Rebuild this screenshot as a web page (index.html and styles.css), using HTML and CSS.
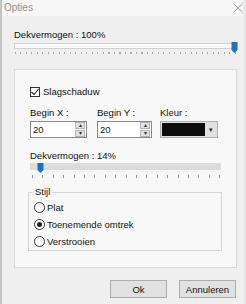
FILE: index.html
```html
<!DOCTYPE html>
<html lang="nl">
<head>
    <meta charset="UTF-8">
    <title>Opties</title>
    <link rel="stylesheet" href="styles.css">
</head>
<body>
    <div class="window">
        <div class="titlebar">
            <span class="title">Opties</span>
            <svg class="close" width="10" height="10" viewBox="0 0 10 10"><path d="M0.5 0.5L9.5 9.5M9.5 0.5L0.5 9.5" stroke="#a0a0a0" stroke-width="1"/></svg>
        </div>
        <div class="content">
            <div class="label top-label">Dekvermogen : 100%</div>
            <div class="slider big">
                <div class="track"></div>
                <svg class="thumb thumb-end" width="7" height="11" viewBox="0 0 7 11"><path d="M0.5 0H6.5V8L3.5 11L0.5 8Z" fill="#1f6fc5"/></svg>
                <div class="ticks ticks-fine"></div>
            </div>

            <div class="group">
                <div class="check-row">
                    <span class="checkbox"><svg width="8" height="8" viewBox="0 0 8 8"><path d="M0.5 4L3 6.5L7.5 1" stroke="#222" stroke-width="1.1" fill="none"/></svg></span>
                    <span class="label">Slagschaduw</span>
                </div>
                <div class="fields">
                    <div class="field field-x">
                        <div class="label">Begin X :</div>
                        <div class="spin">
                            <span class="spin-value">20</span>
                            <span class="spin-btns"><span class="sbtn">&#9652;</span><span class="sbtn">&#9662;</span></span>
                        </div>
                    </div>
                    <div class="field field-y">
                        <div class="label">Begin Y :</div>
                        <div class="spin">
                            <span class="spin-value">20</span>
                            <span class="spin-btns"><span class="sbtn">&#9652;</span><span class="sbtn">&#9662;</span></span>
                        </div>
                    </div>
                    <div class="field">
                        <div class="label">Kleur :</div>
                        <div class="color">
                            <span class="swatch"></span>
                            <span class="drop">&#9662;</span>
                        </div>
                    </div>
                </div>
                <div class="label mid-label">Dekvermogen : 14%</div>
                <div class="slider small">
                    <div class="track track-fill"></div>
                    <svg class="thumb thumb-start" width="7" height="10" viewBox="0 0 7 10"><path d="M0.5 0H6.5V7L3.5 10L0.5 7Z" fill="#1f6fc5"/></svg>
                    <div class="ticks ticks-wide"></div>
                </div>
                <fieldset class="style-box">
                    <legend>Stijl</legend>
                    <div class="radio-row"><span class="radio"></span><span class="label">Plat</span></div>
                    <div class="radio-row"><span class="radio on"></span><span class="label">Toenemende omtrek</span></div>
                    <div class="radio-row"><span class="radio"></span><span class="label">Verstrooien</span></div>
                </fieldset>
            </div>

            <div class="buttons">
                <button>Ok</button>
                <button>Annuleren</button>
            </div>
        </div>
    </div>
</body>
</html>
```

FILE: styles.css
```css
body {
    margin: 0;
    background-color: #e6e6e6;
    font-family: "Liberation Sans", Arial, sans-serif;
    font-size: 9.5px;
    line-height: 12px;
    color: #111;
}
.window {
    width: 244px;
    height: 304px;
    background-color: #efefef;
    border-left: 2px solid #c4c4c4;
    box-sizing: border-box;
}
.titlebar {
    height: 16px;
    display: flex;
    align-items: center;
    justify-content: space-between;
    padding: 0 1px 0 2px;
    background-color: #f7f7f7;
}
.title {
    color: #909090;
    font-size: 10px;
}
.content {
    padding: 0 7px 0 12px;
}
.label {
    white-space: nowrap;
}
.top-label {
    padding-top: 13px;
}
.slider {
    position: relative;
}
.slider.big {
    height: 14px;
    padding-top: 2px;
    box-sizing: border-box;
}
.track {
    height: 6px;
    box-sizing: border-box;
    border: 1px solid #d2d2d2;
    background-color: #f9f9f9;
}
.track-fill {
    border: none;
    height: 7px;
    background-color: #dcdcdc;
}
.thumb {
    position: absolute;
}
.thumb-end {
    top: 1px;
    right: -1px;
}
.thumb-start {
    top: 0;
    left: 7px;
}
.ticks {
    height: 3px;
    margin-top: 3px;
}
.ticks-fine {
    height: 2px;
    background: repeating-linear-gradient(to right, #a8a8a8 0, #a8a8a8 1px, transparent 1px, transparent 5.5px);
    margin-left: 1px;
}
.ticks-wide {
    margin-top: 5px;
    background: repeating-linear-gradient(to right, #9a9a9a 0, #9a9a9a 1px, transparent 1px, transparent 10.4px);
    margin-left: 2px;
}
.group {
    margin-top: 14px;
    height: 199px;
    box-sizing: border-box;
    background-color: #f8f8f8;
    border: 1px solid #dadada;
    padding: 16px 0 0 15px;
}
.check-row {
    display: flex;
    align-items: center;
    gap: 3px;
}
.checkbox {
    width: 10px;
    height: 10px;
    box-sizing: border-box;
    border: 1px solid #333;
    display: flex;
    align-items: center;
    justify-content: center;
    background-color: #fff;
}
.fields {
    display: flex;
    margin-top: 9px;
}
.field-x {
    margin-right: 10px;
}
.field-y {
    margin-right: 8px;
}
.field .label {
    margin-bottom: 2px;
}
.spin {
    width: 57px;
    height: 17px;
    box-sizing: border-box;
    border: 1px solid #8a8a8a;
    background-color: #fff;
    display: flex;
    justify-content: space-between;
}
.field-y .spin {
    width: 55px;
}
.spin-value {
    padding-left: 2px;
    line-height: 15px;
}
.spin-btns {
    display: flex;
    flex-direction: column;
    gap: 1px;
    padding: 0 1px;
}
.sbtn {
    width: 10px;
    height: 7px;
    background-color: #e2e2e2;
    border: 1px solid #b4b4b4;
    box-sizing: border-box;
    font-size: 6px;
    line-height: 5px;
    text-align: center;
    color: #333;
}
.color {
    width: 58px;
    height: 17px;
    box-sizing: border-box;
    border: 1px solid #adadad;
    display: flex;
    background-color: #e1e1e1;
}
.swatch {
    flex: 1;
    background-color: #0d0d0d;
    margin: 1px 0 1px 1px;
}
.drop {
    width: 12px;
    font-size: 7px;
    line-height: 15px;
    text-align: center;
    color: #222;
}
.mid-label {
    margin-top: 12px;
}
.slider.small {
    width: 191px;
    margin-top: 1px;
    height: 15px;
}
.style-box {
    margin: 8px 0 0 -2px;
    width: 194px;
    height: 65px;
    box-sizing: border-box;
    border: 1px solid #d6d6d6;
    padding: 1px 0 0 5px;
}
legend {
    padding: 0 2px;
    margin-left: -1px;
}
.radio-row {
    display: flex;
    align-items: center;
    gap: 2px;
    height: 17px;
}
.radio {
    width: 11px;
    height: 11px;
    box-sizing: border-box;
    border: 1px solid #333;
    border-radius: 50%;
    background-color: #fff;
    position: relative;
}
.radio.on::after {
    content: "";
    position: absolute;
    left: 2px;
    top: 2px;
    width: 5px;
    height: 5px;
    border-radius: 50%;
    background-color: #222;
}
.buttons {
    display: flex;
    justify-content: flex-end;
    gap: 12px;
    margin-top: 12px;
    padding-right: 1px;
}
button {
    width: 57px;
    height: 18px;
    font-family: inherit;
    font-size: 9.5px;
    background-color: #e1e1e1;
    border: 1px solid #adadad;
    color: #111;
    padding: 0;
}
```
